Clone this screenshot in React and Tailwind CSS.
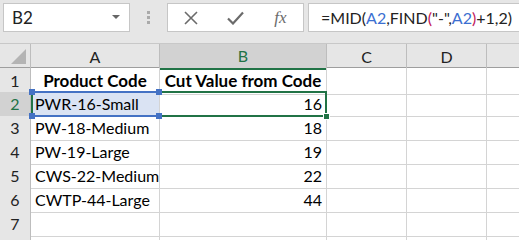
import React from "react";

const rows = [
  { n: 1, a: "Product Code", b: "Cut Value from Code", head: true },
  { n: 2, a: "PWR-16-Small", b: "16" },
  { n: 3, a: "PW-18-Medium", b: "18" },
  { n: 4, a: "PW-19-Large", b: "19" },
  { n: 5, a: "CWS-22-Medium", b: "22" },
  { n: 6, a: "CWTP-44-Large", b: "44" },
  { n: 7, a: "", b: "" },
  { n: 8, a: "", b: "", hideNum: true },
];

const cols = "grid grid-cols-[31px_129px_167px_80px_80px_1fr]";

const Corner = ({ className }) => (
  <div className={`absolute w-[6px] h-[6px] bg-[#4472c4] z-20 ${className}`} />
);

const App = () => {
  return (
    <div className="w-[519px] h-[240px] overflow-hidden bg-white font-['Lato',sans-serif] text-[16px] text-black">
      {/* formula bar */}
      <div className="h-[43px] bg-[#e6e6e6] flex pt-[3px] pl-[3px]">
        <div className="w-[127px] h-[29px] bg-white border border-[#c6c6c6] flex items-center justify-between pl-[8px] pr-[9px]">
          <span className="text-[17px] text-[#222]">B2</span>
          <svg width="8" height="5" viewBox="0 0 8 5">
            <path d="M0 0h8L4 4z" fill="#666" />
          </svg>
        </div>
        <div className="w-[37px] flex flex-col items-center pt-[8px] gap-[2px]">
          <div className="w-[3px] h-[3px] bg-[#aaa]" />
          <div className="w-[3px] h-[3px] bg-[#aaa]" />
          <div className="w-[3px] h-[3px] bg-[#aaa]" />
        </div>
        <div className="w-[137px] h-[29px] bg-white border border-[#c6c6c6] flex items-center">
          <div className="w-[45px] flex justify-center">
            <svg width="14" height="14" viewBox="0 0 14 14">
              <path d="M1 1L13 13M13 1L1 13" stroke="#6b6b6b" strokeWidth="1.6" />
            </svg>
          </div>
          <div className="w-[45px] flex justify-center">
            <svg width="17" height="14" viewBox="0 0 17 14">
              <path d="M1 7.5L6 12.5L16 1.5" stroke="#6b6b6b" strokeWidth="2.2" fill="none" />
            </svg>
          </div>
          <div className="w-[45px] flex justify-center font-['Liberation_Serif',serif] italic text-[17px] text-[#6b6b6b]">
            fx
          </div>
        </div>
        <div className="ml-[4px] flex-1 h-[29px] bg-white border border-[#c6c6c6] border-r-0 flex items-center pl-[12px] text-[16px] text-[#222]">
          <span>=MID(</span>
          <span className="text-[#3c6fd1]">A2</span>
          <span>,FIND</span>
          <span className="text-[#c2185b]">(</span>
          <span>"-",</span>
          <span className="text-[#3c6fd1]">A2</span>
          <span className="text-[#c2185b]">)</span>
          <span>+1,2)</span>
        </div>
      </div>

      {/* column headers */}
      <div className={`${cols} h-[25px] bg-[#e6e6e6] border-t border-[#c8c8c8] border-b border-b-[#9e9e9e] text-[#222]`}>
        <div className="border-r border-[#bdbdbd] relative">
          <svg className="absolute left-[11px] top-[5px]" width="15" height="15" viewBox="0 0 15 15">
            <path d="M15 0V15H0z" fill="#b4b4b4" />
          </svg>
        </div>
        <div className="border-r border-[#bdbdbd] flex items-center justify-center">A</div>
        <div className="bg-[#d2d2d2] border-r border-[#bdbdbd] border-b-2 border-b-[#217346] -mb-[1px] flex items-center justify-center text-[#217346]">B</div>
        <div className="border-r border-[#bdbdbd] flex items-center justify-center">C</div>
        <div className="border-r border-[#bdbdbd] flex items-center justify-center">D</div>
        <div />
      </div>

      {/* grid rows */}
      {rows.map((r) => {
        const sel = r.n === 2;
        return (
          <div key={r.n} className={`${cols} h-[24px]`}>
            <div
              className={`border-r border-b border-[#bdbdbd] flex items-center justify-center ${
                sel ? "bg-[#d2d2d2] text-[#217346]" : "bg-[#e6e6e6] text-[#222]"
              }`}
            >
              {r.hideNum ? "" : r.n}
            </div>
            <div
              className={`relative border-r border-b border-[#d4d4d4] flex items-center px-[4px] whitespace-nowrap ${
                r.head ? "justify-center font-bold text-[17px]" : ""
              } ${sel ? "bg-[#dae3f3]" : ""}`}
            >
              {sel && (
                <>
                  <div className="absolute left-0 top-[-1px] bottom-[-1px] w-[2px] bg-[#217346] z-10" />
                  <div className="absolute left-0 right-[-1px] top-[-1px] h-[2px] bg-[#4472c4] z-10" />
                  <div className="absolute left-0 right-[-1px] bottom-[-1px] h-[2px] bg-[#4472c4] z-10" />
                  <Corner className="left-[-2px] top-[-3px]" />
                  <Corner className="right-[-3px] top-[-3px]" />
                  <Corner className="left-[-2px] bottom-[-3px]" />
                  <Corner className="right-[-3px] bottom-[-3px]" />
                </>
              )}
              {r.a}
            </div>
            <div
              className={`relative border-r border-b border-[#d4d4d4] flex items-center px-[4px] whitespace-nowrap ${
                r.head ? "justify-center font-bold text-[17px]" : "justify-end"
              }`}
            >
              {sel && (
                <>
                  <div className="absolute left-0 right-[-1px] top-[-1px] h-[2px] bg-[#217346] z-10" />
                  <div className="absolute left-0 right-[-1px] bottom-[-1px] h-[2px] bg-[#217346] z-10" />
                  <div className="absolute right-[-1px] top-[-1px] bottom-[-1px] w-[2px] bg-[#217346] z-10" />
                  <div className="absolute right-[-4px] bottom-[-4px] w-[7px] h-[7px] bg-[#217346] border border-white z-20" />
                </>
              )}
              {r.b}
            </div>
            <div className="border-r border-b border-[#d4d4d4]" />
            <div className="border-r border-b border-[#d4d4d4]" />
            <div className="border-b border-[#d4d4d4]" />
          </div>
        );
      })}
    </div>
  );
};

export default App;
